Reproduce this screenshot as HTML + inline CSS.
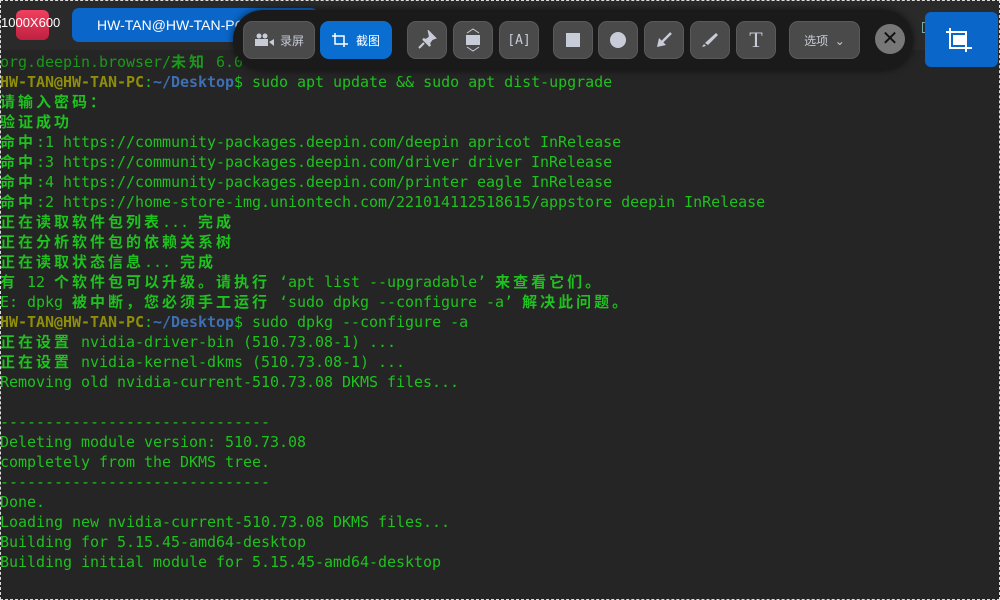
<!DOCTYPE html>
<html><head><meta charset="utf-8"><style>
body{margin:0;width:1000px;height:600px;overflow:hidden;background:#252525;position:relative;font-family:"Liberation Sans","Noto Sans CJK SC",sans-serif}
.term{position:absolute;left:0px;top:52px;margin:0;font-family:"DejaVu Sans Mono","Noto Sans CJK SC",monospace;font-size:15px;line-height:20px;color:#1ec21e;white-space:pre;letter-spacing:-0.03px}
.c{font-family:"Noto Sans CJK SC",sans-serif;font-weight:bold;letter-spacing:3px;font-size:15px}
.p{color:#8e8e0a;font-weight:bold}.d{color:#3f6fb3;font-weight:bold}
.tb{position:absolute;left:233px;top:10px;width:680px;height:60px;border-radius:30px;background:#1a1a1a;box-shadow:0 0 8px rgba(0,0,0,.6)}
.b{position:absolute;top:21px;height:38px;width:40px;border-radius:9px;background:#4a4a4a;border:1px solid #5a5a5a;box-sizing:border-box;color:#c8ccd8;font-size:12px;display:flex;align-items:center;justify-content:center}
.dash{position:absolute;inset:0;border:1px dashed #ddd;pointer-events:none}
</style></head><body>
<div style="position:absolute;left:0;top:0;width:1000px;height:50px;background:#2a2a2a"></div>
<div style="position:absolute;left:16px;top:10px;width:33px;height:30px;border-radius:6px;background:linear-gradient(#f04060,#c02040)"></div>
<div style="position:absolute;left:1px;top:15px;color:#fff;font-size:13px">1000X600</div>
<div style="position:absolute;left:72px;top:8px;width:246px;height:34px;border-radius:7px;background:#0a66c8;color:#fff;font-size:14px;line-height:34px;padding-left:25px;box-sizing:border-box">HW-TAN@HW-TAN-PC:</div>
<pre class="term"><span style="color:#1a9a1a">org.deepin.browser/<span class="c">未知</span> 6.0</span>
<span class="p">HW-TAN@HW-TAN-PC</span>:<span class="d">~/Desktop</span>$ sudo apt update &amp;&amp; sudo apt dist-upgrade
<span class="c">请输入密码：</span>
<span class="c">验证成功</span>
<span class="c">命中</span>:1 https://community-packages.deepin.com/deepin apricot InRelease
<span class="c">命中</span>:3 https://community-packages.deepin.com/driver driver InRelease
<span class="c">命中</span>:4 https://community-packages.deepin.com/printer eagle InRelease
<span class="c">命中</span>:2 https://home-store-img.uniontech.com/221014112518615/appstore deepin InRelease
<span class="c">正在读取软件包列表</span>... <span class="c">完成</span>
<span class="c">正在分析软件包的依赖关系树</span>
<span class="c">正在读取状态信息</span>... <span class="c">完成</span>
<span class="c">有</span> 12 <span class="c">个软件包可以升级。请执行</span> ‘apt list --upgradable’ <span class="c">来查看它们。</span>
E: dpkg <span class="c">被中断，您必须手工运行</span> ‘sudo dpkg --configure -a’ <span class="c">解决此问题。</span>
<span class="p">HW-TAN@HW-TAN-PC</span>:<span class="d">~/Desktop</span>$ sudo dpkg --configure -a
<span class="c">正在设置</span> nvidia-driver-bin (510.73.08-1) ...
<span class="c">正在设置</span> nvidia-kernel-dkms (510.73.08-1) ...
Removing old nvidia-current-510.73.08 DKMS files...

------------------------------
Deleting module version: 510.73.08
completely from the DKMS tree.
------------------------------
Done.
Loading new nvidia-current-510.73.08 DKMS files...
Building for 5.15.45-amd64-desktop
Building initial module for 5.15.45-amd64-desktop</pre>
<div class="tb"></div>
<div class="b" style="left:243px;width:72px"><svg width="22" height="14" style="margin-right:4px"><circle cx="5" cy="3" r="2.5" fill="#c8ccd8"/><circle cx="11" cy="3" r="2.5" fill="#c8ccd8"/><rect x="1" y="6" width="13" height="7" fill="#c8ccd8"/><path d="M15 9l5-3v7z" fill="#c8ccd8"/></svg>录屏</div>
<div class="b" style="left:320px;width:72px;background:#0a6ed1;border-color:#0a6ed1;color:#fff"><svg width="16" height="14" style="margin-right:8px"><path d="M3 0v11h13M0 3h12v11" stroke="#fff" stroke-width="1.5" fill="none"/></svg>截图</div>
<div class="b" style="left:407px"><svg width="20" height="20"><path d="M12 2l6 6-3 1-3 4 1 3-7-7 3 1 4-3z M7 13l-5 5" stroke="#c8ccd8" stroke-width="2" fill="#c8ccd8"/></svg></div>
<div class="b" style="left:453px"><svg width="16" height="26"><path d="M2 6l6-4 6 4M2 20l6 4 6-4" stroke="#c8ccd8" fill="none"/><rect x="1" y="8" width="14" height="10" fill="#c8ccd8"/></svg></div>
<div class="b" style="left:499px;font-family:'DejaVu Sans Mono';font-size:13px">[A]</div>
<div class="b" style="left:553px"><div style="width:14px;height:14px;background:#c8ccd8"></div></div>
<div class="b" style="left:598px"><div style="width:16px;height:16px;border-radius:50%;background:#c8ccd8"></div></div>
<div class="b" style="left:644px"><svg width="18" height="18"><path d="M16 2L5 13" stroke="#c8ccd8" stroke-width="2.5"/><path d="M2 16l2-9 7 7z" fill="#c8ccd8"/></svg></div>
<div class="b" style="left:690px"><svg width="18" height="18"><path d="M15 2l2 2-10 10-3-2z" fill="#c8ccd8"/><path d="M3 13l2 2-4 1z" fill="#c8ccd8"/></svg></div>
<div class="b" style="left:736px;font-family:'Liberation Serif';font-size:22px">T</div>
<div class="b" style="left:789px;width:71px">选项 &nbsp;⌄</div>
<div style="position:absolute;left:875px;top:24px;width:30px;height:30px;border-radius:50%;background:#777;color:#111;font-size:20px;line-height:30px;text-align:center">✕</div>
<div style="position:absolute;left:922px;top:22px;width:9px;height:9px;border:1px solid #7aa"></div>
<div style="position:absolute;left:925px;top:12px;width:73px;height:55px;border-radius:6px;background:#0a66c8"></div>
<svg style="position:absolute;left:945px;top:25px" width="32" height="30"><path d="M5 3v20h22M1 7h20v20" stroke="#fff" stroke-width="2" fill="none"/><rect x="8" y="10" width="12" height="10" fill="#fff"/></svg>
<div class="dash"></div>
</body></html>
